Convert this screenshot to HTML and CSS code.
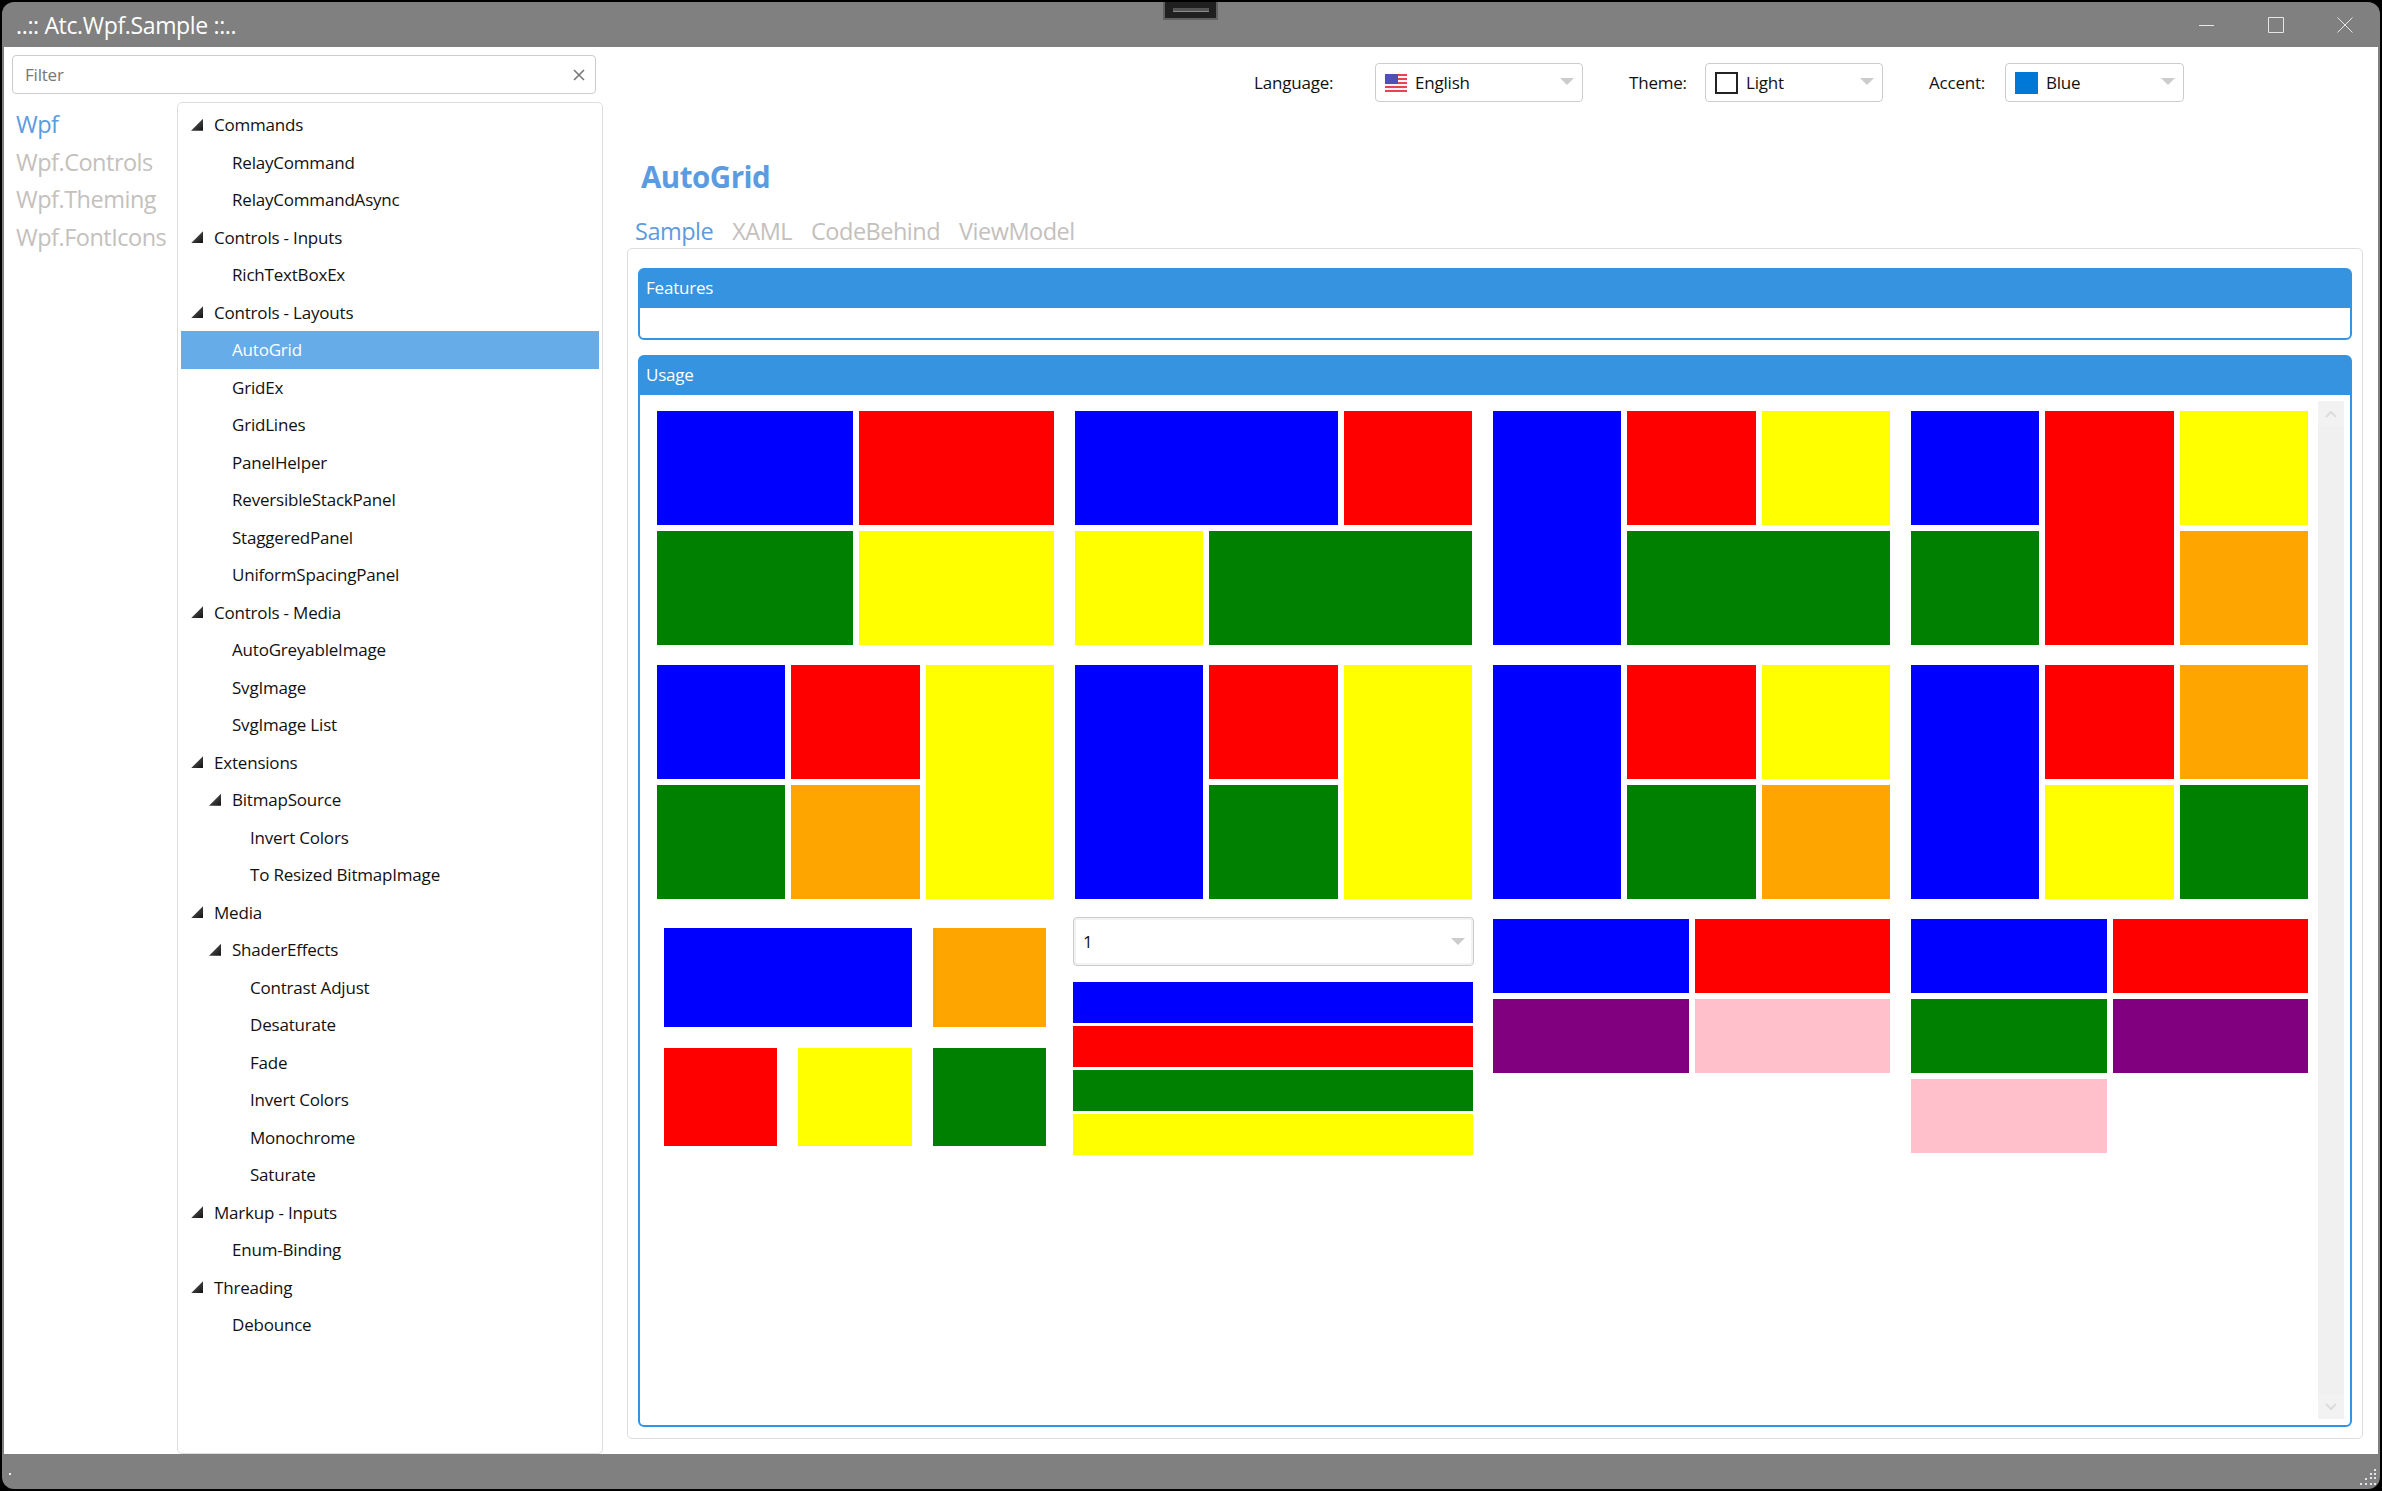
FILE: index.html
```html
<!DOCTYPE html>
<html>
<head>
    <meta charset="utf-8"/>
    <title>Atc.Wpf.Sample</title>
    <link rel="stylesheet" href="styles.css">
</head>

<body>
<div class="window">
    <div class="notch"><span></span></div>
    <div class="titlebar">
        <span class="title-text">..:: Atc.Wpf.Sample ::..</span>
        <div class="win-buttons">
            <svg width="16" height="16" viewBox="0 0 16 16"><path d="M0 8.5H15" stroke="#e6e6e6" fill="none"/></svg>
            <svg width="16" height="16" viewBox="0 0 16 16"><path d="M.5 .5H15.5V15.5H.5Z" stroke="#e6e6e6" fill="none"/></svg>
            <svg width="16" height="16" viewBox="0 0 16 16"><path d="M.5 .5L15.5 15.5M15.5 .5L.5 15.5" stroke="#e6e6e6" fill="none"/></svg>
        </div>
    </div>

    <div class="content">
        <div class="side">
            <div class="filter">
                <span class="filter-text">Filter</span>
                <svg width="12" height="12" viewBox="0 0 12 12"><path d="M1 1L11 11M11 1L1 11" stroke="#777" stroke-width="1.6" fill="none"/></svg>
            </div>
            <div class="side-body">
                <ul class="namespaces">
                    <li class="active">Wpf</li>
                    <li>Wpf.Controls</li>
                    <li>Wpf.Theming</li>
                    <li>Wpf.FontIcons</li>
                </ul>
                <ul class="tree">
                    <li class="head"><i></i>Commands</li>
                    <li class="leaf">RelayCommand</li>
                    <li class="leaf">RelayCommandAsync</li>
                    <li class="head"><i></i>Controls - Inputs</li>
                    <li class="leaf">RichTextBoxEx</li>
                    <li class="head"><i></i>Controls - Layouts</li>
                    <li class="leaf selected">AutoGrid</li>
                    <li class="leaf">GridEx</li>
                    <li class="leaf">GridLines</li>
                    <li class="leaf">PanelHelper</li>
                    <li class="leaf">ReversibleStackPanel</li>
                    <li class="leaf">StaggeredPanel</li>
                    <li class="leaf">UniformSpacingPanel</li>
                    <li class="head"><i></i>Controls - Media</li>
                    <li class="leaf">AutoGreyableImage</li>
                    <li class="leaf">SvgImage</li>
                    <li class="leaf">SvgImage List</li>
                    <li class="head"><i></i>Extensions</li>
                    <li class="subhead"><i></i>BitmapSource</li>
                    <li class="subleaf">Invert Colors</li>
                    <li class="subleaf">To Resized BitmapImage</li>
                    <li class="head"><i></i>Media</li>
                    <li class="subhead"><i></i>ShaderEffects</li>
                    <li class="subleaf">Contrast Adjust</li>
                    <li class="subleaf">Desaturate</li>
                    <li class="subleaf">Fade</li>
                    <li class="subleaf">Invert Colors</li>
                    <li class="subleaf">Monochrome</li>
                    <li class="subleaf">Saturate</li>
                    <li class="head"><i></i>Markup - Inputs</li>
                    <li class="leaf">Enum-Binding</li>
                    <li class="head"><i></i>Threading</li>
                    <li class="leaf">Debounce</li>
                </ul>
            </div>
        </div>

        <div class="main">
            <div class="toolbar">
                <span class="label label-language">Language:</span>
                <div class="combo combo-language">
                    <svg class="flag" width="22" height="18" viewBox="0 0 22 18">
                        <rect width="22" height="18" fill="#f4f4f8"/>
                        <rect width="22" height="2" fill="#e8434f"/>
                        <rect y="4" width="22" height="2" fill="#e8434f"/>
                        <rect y="8" width="22" height="2" fill="#e8434f"/>
                        <rect y="12" width="22" height="2" fill="#e8434f"/>
                        <rect y="16" width="22" height="2" fill="#e8434f"/>
                        <rect width="13" height="10" fill="#4f52b4"/>
                    </svg>
                    <span>English</span>
                    <b class="arrow"></b>
                </div>
                <span class="label">Theme:</span>
                <div class="combo combo-theme">
                    <span class="swatch swatch-light"></span>
                    <span>Light</span>
                    <b class="arrow"></b>
                </div>
                <span class="label">Accent:</span>
                <div class="combo combo-accent">
                    <span class="swatch swatch-blue"></span>
                    <span>Blue</span>
                    <b class="arrow"></b>
                </div>
            </div>

            <h1 class="heading">AutoGrid</h1>

            <div class="tabs">
                <span class="active">Sample</span>
                <span>XAML</span>
                <span>CodeBehind</span>
                <span>ViewModel</span>
            </div>

            <div class="tab-panel">
                <div class="group group-features">
                    <div class="group-head">Features</div>
                </div>
                <div class="group group-usage">
                    <div class="group-head">Usage</div>
                    <div class="usage-body">
                        <div class="demos">
                            <div class="auto c2">
                                <div class="blue"></div><div class="red"></div>
                                <div class="green"></div><div class="yellow"></div>
                            </div>
                            <div class="auto c3">
                                <div class="blue w2"></div><div class="red"></div>
                                <div class="yellow"></div><div class="green w2"></div>
                            </div>
                            <div class="auto c3">
                                <div class="blue h2"></div><div class="red"></div><div class="yellow"></div>
                                <div class="green w2"></div>
                            </div>
                            <div class="auto c3">
                                <div class="blue"></div><div class="red h2"></div><div class="yellow"></div>
                                <div class="green"></div><div class="orange"></div>
                            </div>

                            <div class="auto c3">
                                <div class="blue"></div><div class="red"></div><div class="yellow h2"></div>
                                <div class="green"></div><div class="orange"></div>
                            </div>
                            <div class="auto c3">
                                <div class="blue h2"></div><div class="red"></div><div class="yellow h2"></div>
                                <div class="green"></div>
                            </div>
                            <div class="auto c3">
                                <div class="blue h2"></div><div class="red"></div><div class="yellow"></div>
                                <div class="green"></div><div class="orange"></div>
                            </div>
                            <div class="auto c3">
                                <div class="blue h2"></div><div class="red"></div><div class="orange"></div>
                                <div class="yellow"></div><div class="green"></div>
                            </div>

                            <div class="wide-gaps">
                                <div class="blue w2"></div><div class="orange"></div>
                                <div class="red"></div><div class="yellow"></div><div class="green"></div>
                            </div>
                            <div class="stack">
                                <div class="combo combo-count">
                                    <span>1</span>
                                    <b class="arrow"></b>
                                </div>
                                <div class="bar blue"></div>
                                <div class="bar red"></div>
                                <div class="bar green"></div>
                                <div class="bar yellow"></div>
                            </div>
                            <div class="auto c2 short">
                                <div class="blue"></div><div class="red"></div>
                                <div class="purple"></div><div class="pink"></div>
                            </div>
                            <div class="auto c2 short">
                                <div class="blue"></div><div class="red"></div>
                                <div class="green"></div><div class="purple"></div>
                                <div class="pink"></div>
                            </div>
                        </div>
                        <div class="scrollbar">
                            <div class="scroll-btn">
                                <svg width="12" height="8" viewBox="0 0 12 8"><path d="M1 7L6 2L11 7" stroke="#dcdcdc" stroke-width="2" fill="none"/></svg>
                            </div>
                            <div class="scroll-btn">
                                <svg width="12" height="8" viewBox="0 0 12 8"><path d="M1 1L6 6L11 1" stroke="#dcdcdc" stroke-width="2" fill="none"/></svg>
                            </div>
                        </div>
                    </div>
                </div>
            </div>
        </div>
    </div>

    <div class="statusbar">
        <span class="status-dot"></span>
        <svg class="grip" width="16" height="16" viewBox="0 0 16 16" fill="#e4e4ec">
            <rect x="14" y="0" width="2" height="2"/>
            <rect x="10" y="4" width="2" height="2"/><rect x="14" y="4" width="2" height="2"/>
            <rect x="10" y="8" width="2" height="2"/><rect x="14" y="8" width="2" height="2"/>
            <rect x="5" y="9" width="2" height="2"/>
            <rect x="0" y="14" width="2" height="2"/><rect x="5" y="14" width="2" height="2"/>
            <rect x="10" y="14" width="2" height="2"/><rect x="14" y="14" width="2" height="2"/>
        </svg>
    </div>
</div>
</body>
</html>
```

FILE: styles.css
```css
* {
    margin: 0;
    padding: 0;
    box-sizing: border-box;
}
html, body {
    height: 100%;
    background: #000;
    overflow: hidden;
}
body {
    padding: 2px;
    font-family: "Open Sans", "Noto Sans", sans-serif;
    font-size: 17px;
    letter-spacing: -0.2px;
    color: #111;
}
li {
    list-style: none;
}

/* window frame */
.window {
    position: relative;
    height: 1487px;
    display: flex;
    flex-direction: column;
    background: #808080;
    border-radius: 12px;
    overflow: hidden;
}
.notch {
    position: absolute;
    left: 1161px;
    top: -2px;
    width: 55px;
    height: 20px;
    background: #202020;
    border: 2px solid #606060;
    display: flex;
    align-items: center;
    justify-content: center;
}
.notch span {
    width: 36px;
    height: 4px;
    background: #555;
    border-bottom: 1px solid #8a8a8a;
}
.titlebar {
    height: 45px;
    flex: none;
    display: flex;
    align-items: center;
    justify-content: space-between;
    padding: 0 27px 0 14px;
}
.title-text {
    color: #fff;
    font-size: 23px;
    letter-spacing: -0.35px;
}
.win-buttons {
    display: flex;
    gap: 53px;
}
.content {
    flex: 1;
    min-height: 0;
    margin: 0 2px;
    background: #fff;
    display: flex;
}
.statusbar {
    height: 35px;
    flex: none;
    display: flex;
    align-items: flex-end;
    justify-content: space-between;
    padding: 0 4px 4px 7px;
}
.status-dot {
    width: 2px;
    height: 2px;
    margin-bottom: 10px;
    background: #f0f0f0;
}

/* left side */
.side {
    width: 605px;
    flex: none;
    display: flex;
    flex-direction: column;
    padding: 8px 6px 0 8px;
}
.filter {
    width: 584px;
    height: 39px;
    flex: none;
    border: 1px solid #ccc;
    border-radius: 4px;
    display: flex;
    align-items: center;
    justify-content: space-between;
    padding: 0 10px 0 12px;
}
.filter-text {
    color: #777;
}
.side-body {
    flex: 1;
    min-height: 0;
    margin-top: 8px;
    display: flex;
}
.namespaces {
    width: 165px;
    flex: none;
    padding: 4px 0 0 4px;
    font-size: 23.5px;
    letter-spacing: -0.5px;
    color: #c4c0bc;
}
.namespaces li {
    height: 37.7px;
    line-height: 37.7px;
}
.namespaces .active {
    color: #5b9be0;
}
.tree {
    width: 426px;
    border: 1px solid #ddd;
    border-radius: 5px;
    padding: 3px 3px 0;
}
.tree li {
    height: 37.5px;
    display: flex;
    align-items: center;
}
.tree i {
    width: 12px;
    height: 12px;
    margin-right: 11px;
    background: linear-gradient(135deg, #666, #111);
    clip-path: polygon(100% 0, 100% 100%, 0 100%);
}
.tree .head {
    padding-left: 10px;
}
.tree .subhead {
    padding-left: 28px;
}
.tree .leaf {
    padding-left: 51px;
}
.tree .subleaf {
    padding-left: 69px;
}
.tree .selected {
    background: #65ace8;
    color: #fff;
}

/* main area */
.main {
    flex: 1;
    min-width: 0;
    display: flex;
    flex-direction: column;
    padding: 0 15px 15px 18px;
}
.toolbar {
    height: 55px;
    flex: none;
    padding: 16px 179px 0 0;
    display: flex;
    justify-content: flex-end;
    align-items: center;
}
.label {
    width: 76px;
}
.label-language {
    width: 121px;
}
.combo {
    height: 39px;
    display: flex;
    align-items: center;
    gap: 8px;
    position: relative;
    border: 1px solid #ccc;
    border-radius: 4px;
    padding-left: 9px;
    margin-right: 46px;
}
.combo-language {
    width: 208px;
}
.combo-theme {
    width: 178px;
}
.combo-accent {
    width: 179px;
    margin-right: 0;
}
.combo-count {
    width: 401px;
    height: 49px;
    margin: 0 0 13px;
    box-shadow: inset 0 0 0 2px #f2f2f2;
}
.arrow {
    position: absolute;
    right: 8px;
    top: 14px;
    border-style: solid;
    border-width: 7px 7px 0;
    border-color: #ccc transparent transparent;
}
.combo-count .arrow {
    top: 20px;
}
.swatch {
    width: 23px;
    height: 22px;
}
.swatch-light {
    background: #fff;
    border: 2px solid #222;
}
.swatch-blue {
    background: #0078d7;
}
.heading {
    margin: 55px 0 0 14px;
    height: 40px;
    line-height: 40px;
    font-size: 29.5px;
    font-weight: 700;
    letter-spacing: -0.5px;
    color: #5b9be0;
}
.tabs {
    margin-top: 17px;
    height: 34px;
    flex: none;
    display: flex;
    gap: 19px;
    padding-left: 8px;
    font-size: 23.5px;
    line-height: 34px;
    letter-spacing: -0.5px;
    color: #c4c0bc;
}
.tabs .active {
    color: #5b9be0;
}
.tab-panel {
    flex: 1;
    min-height: 0;
    display: flex;
    flex-direction: column;
    gap: 15px;
    border: 1px solid #ddd;
    border-radius: 5px;
    padding: 19px 10px 11px;
}
.group {
    border: 2px solid #3593df;
    border-radius: 6px;
}
.group-head {
    height: 38px;
    line-height: 36px;
    padding-left: 6px;
    background: #3593df;
    color: #fff;
}
.group-features {
    height: 72px;
    flex: none;
}
.group-usage {
    flex: 1;
    min-height: 0;
    display: flex;
    flex-direction: column;
}
.usage-body {
    flex: 1;
    min-height: 0;
    display: flex;
    justify-content: space-between;
    padding: 6px 6px 6px 17px;
}
.scrollbar {
    width: 26px;
    background: #f0f0f0;
    display: flex;
    flex-direction: column;
    justify-content: space-between;
}
.scroll-btn {
    height: 25px;
    display: flex;
    align-items: center;
    justify-content: center;
    background: #f2f2f2;
}

/* sample grids */
.demos {
    margin-top: 10px;
    display: grid;
    grid-template-columns: repeat(4, 397px);
    grid-template-rows: 234px 234px auto;
    column-gap: 21px;
    row-gap: 20px;
    align-items: start;
}
.auto {
    height: 234px;
    display: grid;
    grid-template-rows: repeat(2, 1fr);
    gap: 6px;
}
.c2 {
    grid-template-columns: repeat(2, 1fr);
}
.c3 {
    grid-template-columns: repeat(3, 1fr);
}
.short {
    height: auto;
    grid-template-rows: none;
    grid-auto-rows: 74px;
}
.wide-gaps {
    display: grid;
    grid-template-columns: repeat(3, 1fr);
    grid-template-rows: 99px 98px;
    gap: 21px;
    padding: 9px 8px 0 7px;
}
.stack {
    margin: -2px -2px 0;
    display: flex;
    flex-direction: column;
    gap: 3px;
}
.bar {
    width: 400px;
    height: 41px;
}
.w2 {
    grid-column: span 2;
}
.h2 {
    grid-row: span 2;
}
.blue {
    background: #00f;
}
.red {
    background: #f00;
}
.green {
    background: #008000;
}
.yellow {
    background: #ff0;
}
.orange {
    background: #ffa500;
}
.purple {
    background: #800080;
}
.pink {
    background: #ffc0cb;
}
```
